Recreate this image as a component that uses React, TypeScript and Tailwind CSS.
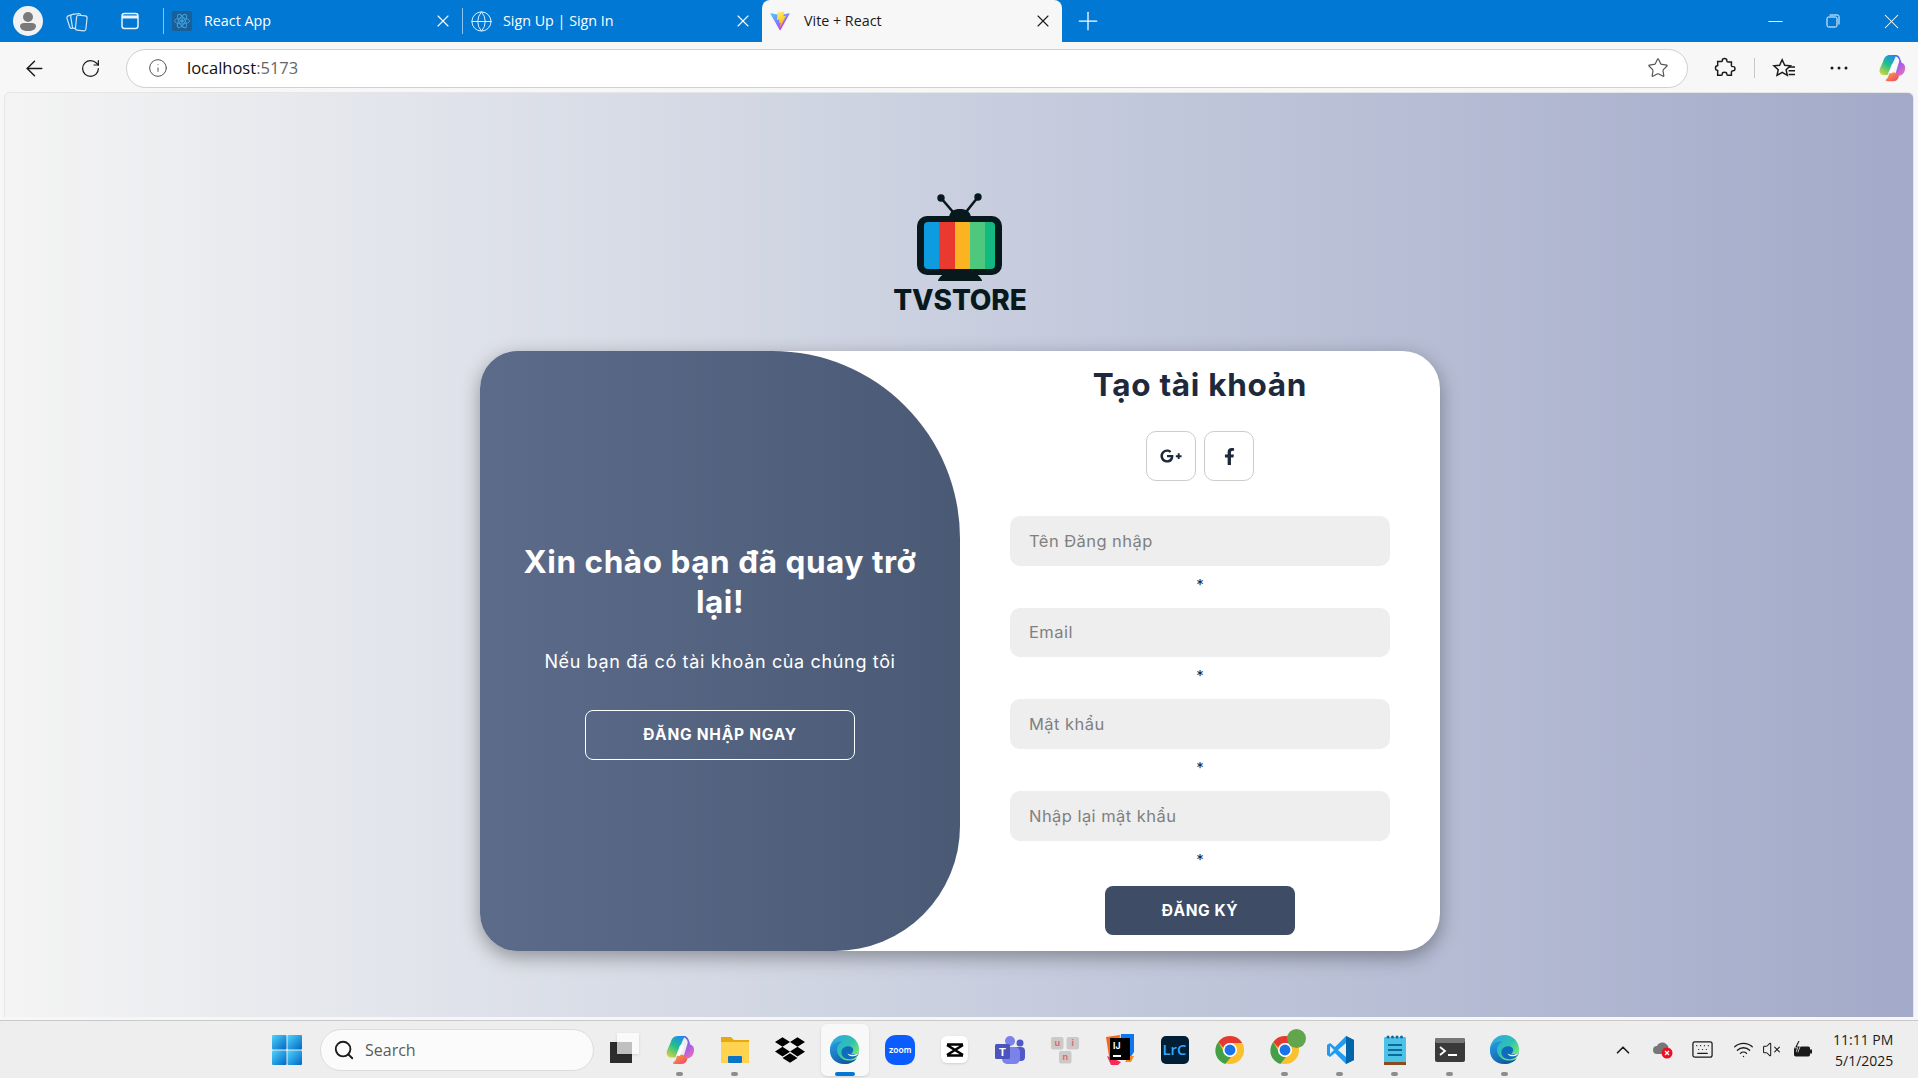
import React from "react";
import { X, Plus, ArrowLeft, RotateCw, Info, Star, Search, ChevronUp, Keyboard, Wifi, VolumeX, Minus, Globe } from "lucide-react";
import { FaGooglePlusG, FaFacebookF, FaDropbox } from "react-icons/fa";

const Copilot = ({ s = 30, id }: { s?: number; id: string }) => (
  <svg width={s} height={s} viewBox="0 0 32 32">
    <defs>
      <linearGradient id={`${id}a`} x1="0.7" y1="0" x2="0.2" y2="1"><stop offset="0" stopColor="#1c8fe8" /><stop offset="0.45" stopColor="#22c08a" /><stop offset="1" stopColor="#e8d63a" /></linearGradient>
      <linearGradient id={`${id}b`} x1="0.2" y1="0" x2="0.8" y2="1"><stop offset="0" stopColor="#2a6fe6" /><stop offset="0.5" stopColor="#a25fe8" /><stop offset="1" stopColor="#ee6fb8" /></linearGradient>
      <linearGradient id={`${id}c`} x1="0" y1="0" x2="1" y2="1"><stop offset="0" stopColor="#f9a83a" /><stop offset="1" stopColor="#ef3f6d" /></linearGradient>
    </defs>
    <path d="M21 1h-7C9 1 7 4 6 8l-4 9c-1 4 1 7 5 7h4l-1 2z" fill={`url(#${id}a)`} />
    <path d="M17 1h3c3 0 5 2 6 6l1 3c3 1 4 3 4 6 0 5-3 9-8 9h-4l2-6 3-10c1-3-1-6-7-8z" fill={`url(#${id}b)`} />
    <path d="M13 21h6l5 4c-1 4-3 6-7 6h-6c-2 0-3-1-2-2 2-1 3-3 4-8z" fill={`url(#${id}c)`} />
    <path d="M16 11h4l-4 11h-4z" fill="#fff" />
  </svg>
);

const Edge = ({ s = 32, id }: { s?: number; id: string }) => (
  <svg width={s} height={s} viewBox="0 0 32 32">
    <defs>
      <linearGradient id={`${id}a`} x1="0.1" y1="0" x2="0.9" y2="0.8"><stop offset="0" stopColor="#2aa7e8" /><stop offset="0.55" stopColor="#2fc1b0" /><stop offset="1" stopColor="#7ded6a" /></linearGradient>
      <linearGradient id={`${id}b`} x1="0" y1="0" x2="0.8" y2="1"><stop offset="0" stopColor="#2a9fe4" /><stop offset="1" stopColor="#0b4f9c" /></linearGradient>
    </defs>
    <circle cx="16" cy="16" r="15" fill={`url(#${id}a)`} />
    <path d="M1 17C1 10 8 7 14 8 9 10 7 15 9 20c3 7 13 10 20 5-3 4-8 6-13 6C7 31 1 25 1 17z" fill={`url(#${id}b)`} />
    <path d="M13 17c1-3 5-5 9-4 2 1 3 2 3 4 0 1-1 2-2 3 2 1 5 1 8-1-1 4-5 7-10 7-6 0-9-4-8-9z" fill="#0f6cbd" />
    <path d="M19 20c3 2 8 2 12-1-1 2-3 4-6 4-3 0-5-1-6-3z" fill="#f4f6f7" />
  </svg>
);

const Chrome = ({ s = 30 }: { s?: number }) => (
  <svg width={s} height={s} viewBox="0 0 32 32">
    <circle cx="16" cy="16" r="15" fill="#fbc02d" />
    <path d="M16 1a15 15 0 0 1 13 7.500H16a7.500 7.500 0 0 0-7 5L3.500 7.500A15 15 0 0 1 16 1z" fill="#e53935" />
    <path d="M3.500 7.500L10 19a7.500 7.500 0 0 0 7 4.500L11 31A15 15 0 0 1 3.500 7.500z" fill="#43a047" />
    <circle cx="16" cy="16" r="7.500" fill="#fff" />
    <circle cx="16" cy="16" r="5.800" fill="#1a73e8" />
  </svg>
);

const IconCell = ({ children, run, active }: { children: React.ReactNode; run?: boolean; active?: boolean }) => (
  <div className={`relative flex h-[52px] w-[48px] mx-[3.5px] items-center justify-center rounded-md ${active ? "bg-[#f8f8f8] shadow-sm" : ""}`}>
    {children}
    {run && <span className="absolute bottom-[0px] h-[4px] w-[7px] rounded-full bg-[#8d8d8d]" />}
    {active && <span className="absolute bottom-[0px] h-[4px] w-[20px] rounded-full bg-[#0078d4]" />}
  </div>
);

const Tab = ({ icon, title, active, w }: { icon: React.ReactNode; title: string; active?: boolean; w: string }) => (
  <div className={`flex h-full shrink-0 items-center ${w} ${active ? "h-[42px] rounded-t-lg bg-[#f7f7f7] text-[#1a1a1a]" : "text-white"}`}>
    <div className="flex w-[36px] shrink-0 justify-center">{icon}</div>
    <span className={`flex-1 text-[14.300px] leading-[20px] ${active ? "ml-[6px]" : "ml-[4px]"}`}>{title}</span>
    <X size={20} strokeWidth={1.300} className="mr-[9px]" />
  </div>
);

const Field = ({ placeholder }: { placeholder: string }) => (
  <div className="flex flex-col items-center">
    <input
      placeholder={placeholder}
      className="h-[49.500px] w-[380px] rounded-[10px] bg-[#eeeeee] px-[19px] text-[16.500px] tracking-[0.45px] text-[#333] outline-none placeholder:text-[#808080]"
    />
    <span className="mt-[10.200px] h-[32px] text-[15px] leading-[18px] text-[#1e293b]">*</span>
  </div>
);

export default function App() {
  return (
    <div className="flex h-[1078px] w-[1918px] flex-col overflow-hidden bg-[#f7f7f7] font-['Open_Sans',sans-serif]">
      {/* title bar with tabs */}
      <div className="flex h-[42px] shrink-0 items-center bg-[#0078d4] pl-[13px]">
        <div className="flex h-[30px] w-[30px] items-center justify-center overflow-hidden rounded-full bg-[#f2f2f2]">
          <svg width="30" height="30" viewBox="0 0 30 30"><circle cx="15" cy="11" r="5" fill="#7a7a7a" /><path d="M7 20c0-2 2-3 4-3h8c2 0 4 1 4 3 0 3-3 5-8 5s-8-2-8-5z" fill="#7a7a7a" /></svg>
        </div>
        <div className="ml-[20px] flex w-[28px] justify-center">
          <svg width="23" height="23" viewBox="0 0 23 23" fill="none" stroke="#cfe4f7" strokeWidth="1.200"><rect x="2" y="5" width="9" height="13" rx="2" transform="rotate(-18 6 11)" /><rect x="5.500" y="4" width="10" height="14" rx="2" transform="rotate(-9 10 11)" fill="#0078d4" /><rect x="10" y="5.500" width="10.500" height="15" rx="2" transform="rotate(6 15 13)" fill="#0078d4" /></svg>
        </div>
        <div className="ml-[25px] flex w-[28px] justify-center">
          <svg width="20" height="20" viewBox="0 0 20 20" fill="none" stroke="#e8f2fb" strokeWidth="1.500"><rect x="2" y="2.500" width="16" height="15" rx="2.500" /><path d="M2 6h16" strokeWidth="3" /></svg>
        </div>
        <div className="ml-[19px] h-[26px] w-px bg-[#8cc2ec]" />
        <div className="flex h-full items-center">
          <Tab
            w="w-[298px]"
            title="React App"
            icon={
              <div className="flex h-[20px] w-[20px] items-center justify-center rounded-[2px] bg-[#1a5f98]">
                <svg width="18" height="18" viewBox="0 0 24 24" fill="none" stroke="#3f9fdc" strokeWidth="1.200"><ellipse cx="12" cy="12" rx="10" ry="4" /><ellipse cx="12" cy="12" rx="10" ry="4" transform="rotate(60 12 12)" /><ellipse cx="12" cy="12" rx="10" ry="4" transform="rotate(120 12 12)" /><circle cx="12" cy="12" r="1.800" fill="#3f9fdc" /></svg>
              </div>
            }
          />
          <div className="h-[26px] w-px bg-[#8cc2ec]" />
          <Tab w="w-[299px]" title="Sign Up | Sign In" icon={<Globe size={23} strokeWidth={1} color="#e8f2fb" />} />
          <Tab
            active
            w="w-[300px]"
            title="Vite + React"
            icon={
              <svg width="20" height="20" viewBox="0 0 410 404">
                <defs>
                  <linearGradient id="va" x1="0" y1="0" x2="0.6" y2="1"><stop offset="0" stopColor="#41d1ff" /><stop offset="1" stopColor="#bd34fe" /></linearGradient>
                  <linearGradient id="vb" x1="0" y1="0" x2="0.3" y2="1"><stop offset="0" stopColor="#ffea83" /><stop offset="0.5" stopColor="#ffdd35" /><stop offset="1" stopColor="#ffa800" /></linearGradient>
                </defs>
                <path d="M399.600 59.500L215.900 388.200c-3.800 6.800-13.500 6.800-17.400.1L11.200 59.500C7 52.100 13.300 43.200 21.700 44.700l183.900 32.900c1.200.2 2.400.2 3.500 0L389 44.800c8.300-1.500 14.700 7.300 10.600 14.700z" fill="url(#va)" />
                <path d="M292.900 1.600L156.800 28.300c-2.200.4-3.900 2.300-4 4.600l-8.400 141.500c-.2 3.300 2.900 5.900 6.100 5.200l37.900-8.800c3.500-.8 6.700 2.300 6 5.900l-11.300 55.200c-.8 3.700 2.800 6.900 6.400 5.800l23.400-7.100c3.600-1.100 7.100 2.100 6.400 5.800l-17.900 86.600c-1.100 5.400 6.100 8.400 9.100 3.700l2-3.100 110.900-221.300c1.900-3.700-1.300-7.900-5.400-7.100l-39 7.500c-3.700.7-6.800-2.700-5.700-6.300l25.400-88.300c1.100-3.600-2.100-7.100-5.800-6.300z" fill="url(#vb)" />
              </svg>
            }
          />
        </div>
        <Plus size={30} strokeWidth={1} color="#fff" className="ml-[11px]" />
        <div className="ml-auto flex h-full items-center">
          <div className="flex w-[54px] justify-center"><Minus size={23} strokeWidth={1} color="#fff" /></div>
          <div className="flex w-[62px] justify-center">
            <svg width="14" height="14" viewBox="0 0 14 14" fill="none" stroke="#fff" strokeWidth="1"><rect x="1" y="3" width="10" height="10" rx="1.500" /><path d="M3.500 1h8c1 0 1.500.5 1.500 1.500v8" /></svg>
          </div>
          <div className="flex w-[54px] justify-center"><X size={25} strokeWidth={1} color="#fff" /></div>
        </div>
      </div>

      {/* toolbar */}
      <div className="flex h-[50px] shrink-0 items-center bg-[#f7f7f7] pt-[2px] text-[#1a1a1a]">
        <ArrowLeft size={25} strokeWidth={1.400} className="ml-[22px]" />
        <RotateCw size={21} strokeWidth={1.400} className="ml-[33px]" />
        <div className="ml-[25px] flex h-[39px] w-[1562px] items-center rounded-full border border-[#d0d0d0] bg-white">
          <Info size={20} strokeWidth={1.200} color="#555" className="ml-[21px]" />
          <span className="ml-[19px] text-[16.500px] leading-none text-[#111]">localhost<span className="text-[#666]">:5173</span></span>
          <Star size={22} strokeWidth={1.300} color="#555" className="ml-auto mr-[18px]" />
        </div>
        <svg width="22" height="22" viewBox="0 0 24 24" fill="none" stroke="#1a1a1a" strokeWidth="1.600" className="ml-[26px]"><path d="M9 4c0-3 5-3 5 0 0 1 .5 1.500 1.500 1.500H19v4c0 1 1 1 2 1 2.500 0 2.500 4.500 0 4.500-1 0-2 0-2 1v4h-4c-1 0-1-1-1-1.500 0-2.500-5-2.500-5 0 0 .5 0 1.500-1 1.500H4v-4c0-1 .5-1.500-.5-1.500-2.500 0-2.500-5 0-5 1 0 .5-.5.5-1.500v-3h4c1 0 1-.5 1-1z" /></svg>
        <div className="ml-[18px] h-[20px] w-px bg-[#c8c8c8]" />
        <svg width="24" height="22" viewBox="0 0 26 24" fill="none" stroke="#1a1a1a" strokeWidth="1.600" className="ml-[17px]"><path d="M11 3l2.800 6 6.200.6-4.700 4.200 1.300 6.200-5.600-3.200L5.400 20l1.300-6.200L2 9.600l6.200-.6z" /><path d="M18 11h7M18 15h7M18 19h7" /></svg>
        <svg width="20" height="6" viewBox="0 0 20 6" fill="#1a1a1a" className="ml-[33px]"><circle cx="3" cy="3" r="1.500" /><circle cx="10" cy="3" r="1.500" /><circle cx="17" cy="3" r="1.500" /></svg>
        <div className="ml-[29px]"><Copilot s={28} id="cp1" /></div>
      </div>

      {/* page */}
      <div className="mx-[4px] flex h-[925px] shrink-0 flex-col items-center rounded-t-md border border-b-0 border-[#e6e6e6] bg-gradient-to-r from-[#f4f4f4] via-[#c9cfdf] to-[#a3aac9] pt-[100px] pl-[2px] font-['Inter',sans-serif]">
        <div className="flex h-[158px] shrink-0 flex-col items-center">
          <svg width="90" height="88" viewBox="0 0 90 88">
            <path d="M26 5L38 19M63 4L51 19" stroke="#07191c" strokeWidth="2.600" />
            <circle cx="26" cy="5" r="3.700" fill="#07191c" />
            <circle cx="63" cy="4" r="3.700" fill="#07191c" />
            <path d="M34 24c1-6 5-8 11-8s10 2 11 8z" fill="#07191c" />
            <rect x="2" y="23" width="85" height="59" rx="10" fill="#07191c" />
            <path d="M23 88c0-2 4-7 7-7h30c3 0 7 5 7 7z" fill="#07191c" />
            <path d="M13 29h11v47H13a4 4 0 0 1-4-4V33a4 4 0 0 1 4-4z" fill="#0d9ce0" />
            <rect x="24" y="29" width="16" height="47" fill="#ea3a30" />
            <rect x="40" y="29" width="15" height="47" fill="#fbb321" />
            <rect x="55" y="29" width="15" height="47" fill="#4dc87d" />
            <path d="M70 29h6a4 4 0 0 1 4 4v39a4 4 0 0 1-4 4h-6z" fill="#12ba82" />
          </svg>
          <span className="mt-[3px] text-[28px] leading-[32px] font-extrabold tracking-[-0.1px] text-[#07191c]">TVSTORE</span>
        </div>

        <div className="flex h-[600px] w-[960px] shrink-0 rounded-[37.500px] bg-white shadow-[0_6px_19px_rgba(0,0,0,0.35)]">
          <div className="flex w-[480px] flex-col items-center justify-center rounded-tl-[37.500px] rounded-tr-[187.500px] rounded-br-[125px] rounded-bl-[37.500px] bg-gradient-to-r from-[#5c6b8a] to-[#4a5a75] px-[30px] text-white">
            <h1 className="text-center text-[31.500px] leading-[40px] font-bold tracking-[0.55px]">Xin chào bạn đã quay trở lại!</h1>
            <p className="mt-[26px] text-[18px] leading-[28px] tracking-[0.65px]">Nếu bạn đã có tài khoản của chúng tôi</p>
            <button className="mt-[34px] h-[50px] w-[270px] rounded-lg border border-white text-[15.500px] font-bold tracking-[0.75px]">ĐĂNG NHẬP NGAY</button>
          </div>

          <div className="flex w-[480px] flex-col items-center">
            <h2 className="mt-[14px] text-[31.500px] leading-[40px] font-bold tracking-[0.7px] text-[#1e293b]">Tạo tài khoản</h2>
            <div className="mt-[26px] flex gap-[8px] text-[#1e293b]">
              <button className="flex h-[50px] w-[50px] items-center justify-center rounded-[10px] border border-[#cccccc]"><FaGooglePlusG size={22} /></button>
              <button className="flex h-[50px] w-[50px] items-center justify-center rounded-[10px] border border-[#cccccc]"><FaFacebookF size={17} /></button>
            </div>
            <div className="mt-[35px] flex flex-col">
              <Field placeholder="Tên Đăng nhập" />
              <Field placeholder="Email" />
              <Field placeholder="Mật khẩu" />
              <Field placeholder="Nhập lại mật khẩu" />
            </div>
            <button className="mt-[3px] h-[49px] w-[190px] rounded-lg bg-[#3e4c66] text-[15.500px] font-bold tracking-[0.6px] text-white">ĐĂNG KÝ</button>
          </div>
        </div>
      </div>

      {/* taskbar */}
      <div className="mt-[3px] flex flex-1 items-center border-t border-[#c9c9c9] bg-[#eeeeee] text-[#1a1a1a]">
        <svg width="30" height="30" viewBox="0 0 30 30" className="ml-[272px]">
          <defs><linearGradient id="wn" x1="0" y1="0" x2="1" y2="1"><stop offset="0" stopColor="#4fd2fb" /><stop offset="1" stopColor="#0067c6" /></linearGradient></defs>
          <rect x="0" y="0" width="14.500" height="14.500" rx="1" fill="url(#wn)" /><rect x="15.500" y="0" width="14.500" height="14.500" rx="1" fill="url(#wn)" /><rect x="0" y="15.500" width="14.500" height="14.500" rx="1" fill="url(#wn)" /><rect x="15.500" y="15.500" width="14.500" height="14.500" rx="1" fill="url(#wn)" />
        </svg>
        <div className="ml-[18px] flex h-[42px] w-[274px] items-center rounded-full border border-[#dcdcdc] bg-[#fbfbfb]">
          <Search size={22} strokeWidth={2} className="ml-[12px]" />
          <span className="ml-[10px] text-[16px] text-[#5c5c5c]">Search</span>
        </div>
        <div className="ml-[3px] flex items-center">
          <IconCell>
            <div className="relative h-[22px] w-[29px]"><div className="absolute bottom-[-2px] left-0 h-[21px] w-[22px] bg-[#2d2d2d]" /><div className="absolute top-[-6px] right-0 h-[21px] w-[22px] bg-white/70 shadow-sm" /></div>
          </IconCell>
          <IconCell run><Copilot s={30} id="cp2" /></IconCell>
          <IconCell run>
            <svg width="30" height="28" viewBox="0 0 30 28"><path d="M1 1h10l3 3h15v23H1z" fill="#e7a90f" /><rect x="1" y="6" width="28" height="21" fill="#ffd34f" /><rect x="8" y="20" width="14" height="7" rx="1" fill="#0c74c8" /></svg>
          </IconCell>
          <IconCell><FaDropbox size={30} color="#000" /></IconCell>
          <IconCell active><Edge s={31} id="eg1" /></IconCell>
          <IconCell>
            <svg width="32" height="32" viewBox="0 0 32 32"><path d="M12 1h9c6 0 10 4 10 10v9c0 7-5 11-11 11h-8C6 31 1 27 1 20v-8C1 5 6 1 12 1z" fill="#0b5cff" /><text x="16" y="19" fontSize="8.500" fill="#fff" textAnchor="middle" fontFamily="Inter" fontWeight="600">zoom</text></svg>
          </IconCell>
          <IconCell>
            <div className="flex h-[27px] w-[27px] items-center justify-center rounded-md bg-white shadow-sm">
              <svg width="20" height="16" viewBox="0 0 20 16" fill="none" stroke="#000" strokeWidth="2.600"><path d="M2 3l16 10M18 3L2 13M2 2.500h16M2 13.500h16" /></svg>
            </div>
          </IconCell>
          <IconCell>
            <svg width="32" height="30" viewBox="0 0 32 30"><circle cx="16" cy="6" r="5" fill="#7b83eb" /><circle cx="26" cy="8" r="3.500" fill="#5059c9" /><rect x="18" y="12" width="13" height="14" rx="4" fill="#5059c9" /><rect x="8" y="12" width="18" height="17" rx="5" fill="#7b83eb" /><rect x="1" y="9" width="15" height="15" rx="1.500" fill="#4b53bc" /><text x="8.500" y="20.500" fontSize="11" fill="#fff" fontWeight="700" textAnchor="middle" fontFamily="Inter">T</text></svg>
          </IconCell>
          <IconCell>
            <svg width="30" height="28" viewBox="0 0 30 28"><rect x="1" y="1" width="12.500" height="12.500" rx="2" fill="#cdc9c9" /><rect x="16.500" y="1" width="12.500" height="12.500" rx="2" fill="#cdc9c9" /><rect x="9" y="15" width="12.500" height="12.500" rx="2" fill="#cdc9c9" /><text x="7.200" y="10" fontSize="9" fontWeight="700" fill="#e06a6a" textAnchor="middle" fontFamily="Inter">u</text><text x="22.700" y="10" fontSize="9" fontWeight="700" fill="#e06a6a" textAnchor="middle" fontFamily="Inter">i</text><text x="15.200" y="24" fontSize="9" fontWeight="700" fill="#e06a6a" textAnchor="middle" fontFamily="Inter">n</text></svg>
          </IconCell>
          <IconCell>
            <svg width="30" height="32" viewBox="0 0 30 32"><path d="M1 3l14-2-4 30-6-2z" fill="#f9651d" /><path d="M16 0h13v18l-4 6H14z" fill="#0b78f1" /><path d="M24 22h5l-3 6h-6z" fill="#f9851d" /><path d="M2 22l14 6-3 3H6z" fill="#fe2857" /><rect x="5" y="4" width="20" height="22" fill="#000" /><rect x="8" y="21" width="8" height="2" fill="#fff" /><text x="8" y="14.500" fontSize="8.500" fill="#fff" fontWeight="700" fontFamily="Inter">IJ</text></svg>
          </IconCell>
          <IconCell>
            <div className="flex h-[28px] w-[28px] items-center justify-center rounded-[5px] bg-[#001e36] text-[15px] leading-none font-semibold text-[#31a8ff]">LrC</div>
          </IconCell>
          <IconCell><Chrome s={30} /></IconCell>
          <IconCell run>
            <div className="relative"><Chrome s={30} /><div className="absolute right-[-6px] top-[-6px] h-[19px] w-[19px] rounded-full bg-[#62a54c]" /></div>
          </IconCell>
          <IconCell run>
            <svg width="30" height="30" viewBox="0 0 30 30"><path d="M21 1l8 4v20l-8 4-11-11-5 4-3-2V10l3-2 5 4z" fill="#1f9cf0" /><path d="M21 8l-8 7 8 7z" fill="#eeeeee" /><path d="M5 11v8l4-4z" fill="#eeeeee" /><path d="M21 1l8 4v20l-8 4z" fill="#0065a9" /></svg>
          </IconCell>
          <IconCell run>
            <svg width="24" height="32" viewBox="0 0 24 32"><rect x="1" y="3" width="22" height="26" rx="1" fill="#4cc2e8" /><rect x="1" y="28" width="22" height="3" fill="#8a4b1f" /><g fill="#0b6a99"><circle cx="5" cy="3" r="1.500" /><circle cx="9.500" cy="3" r="1.500" /><circle cx="14" cy="3" r="1.500" /><circle cx="18.500" cy="3" r="1.500" /><rect x="5" y="10" width="14" height="2" /><rect x="5" y="15" width="14" height="2" /><rect x="5" y="20" width="14" height="2" /></g></svg>
          </IconCell>
          <IconCell run>
            <svg width="30" height="24" viewBox="0 0 30 24"><rect width="30" height="24" rx="2" fill="#3a3a3a" /><rect width="30" height="5" rx="2" fill="#777" /><path d="M5 9l5 4-5 4" stroke="#fff" strokeWidth="1.800" fill="none" /><rect x="13" y="16" width="9" height="2" fill="#fff" /></svg>
          </IconCell>
          <IconCell run><Edge s={31} id="eg2" /></IconCell>
        </div>
        <ChevronUp size={22} strokeWidth={1.800} className="ml-[80px]" />
        <svg width="22" height="20" viewBox="0 0 22 20" className="ml-[18px]"><path d="M5 14a4 4 0 0 1 0-8c1-3 6-5 9-2 2 1 3 3 2 6L9 14z" fill="#777" /><circle cx="15" cy="13" r="5.500" fill="#e81123" /><path d="M13 11l4 4M17 11l-4 4" stroke="#fff" strokeWidth="1.200" /></svg>
        <Keyboard size={23} strokeWidth={1.300} className="ml-[17px]" />
        <Wifi size={21} strokeWidth={1.500} className="ml-[19px]" />
        <VolumeX size={19} strokeWidth={1.300} className="ml-[8px]" />
        <svg width="20" height="18" viewBox="0 0 20 18" className="ml-[12px]"><rect x="1.500" y="6" width="15" height="9" rx="1" fill="#1a1a1a" stroke="#1a1a1a" /><rect x="17" y="8.500" width="2" height="4" fill="#1a1a1a" /><path d="M6 0L3 6h3L4 11" stroke="#eeeeee" strokeWidth="2.500" fill="none" /><path d="M6 0L3 6h3L4 11" stroke="#1a1a1a" strokeWidth="1.100" fill="none" /></svg>
        <div className="ml-[20px] flex flex-col items-end text-[14px] leading-[21px]">
          <span>11:11 PM</span>
          <span>5/1/2025</span>
        </div>
      </div>
    </div>
  );
}
